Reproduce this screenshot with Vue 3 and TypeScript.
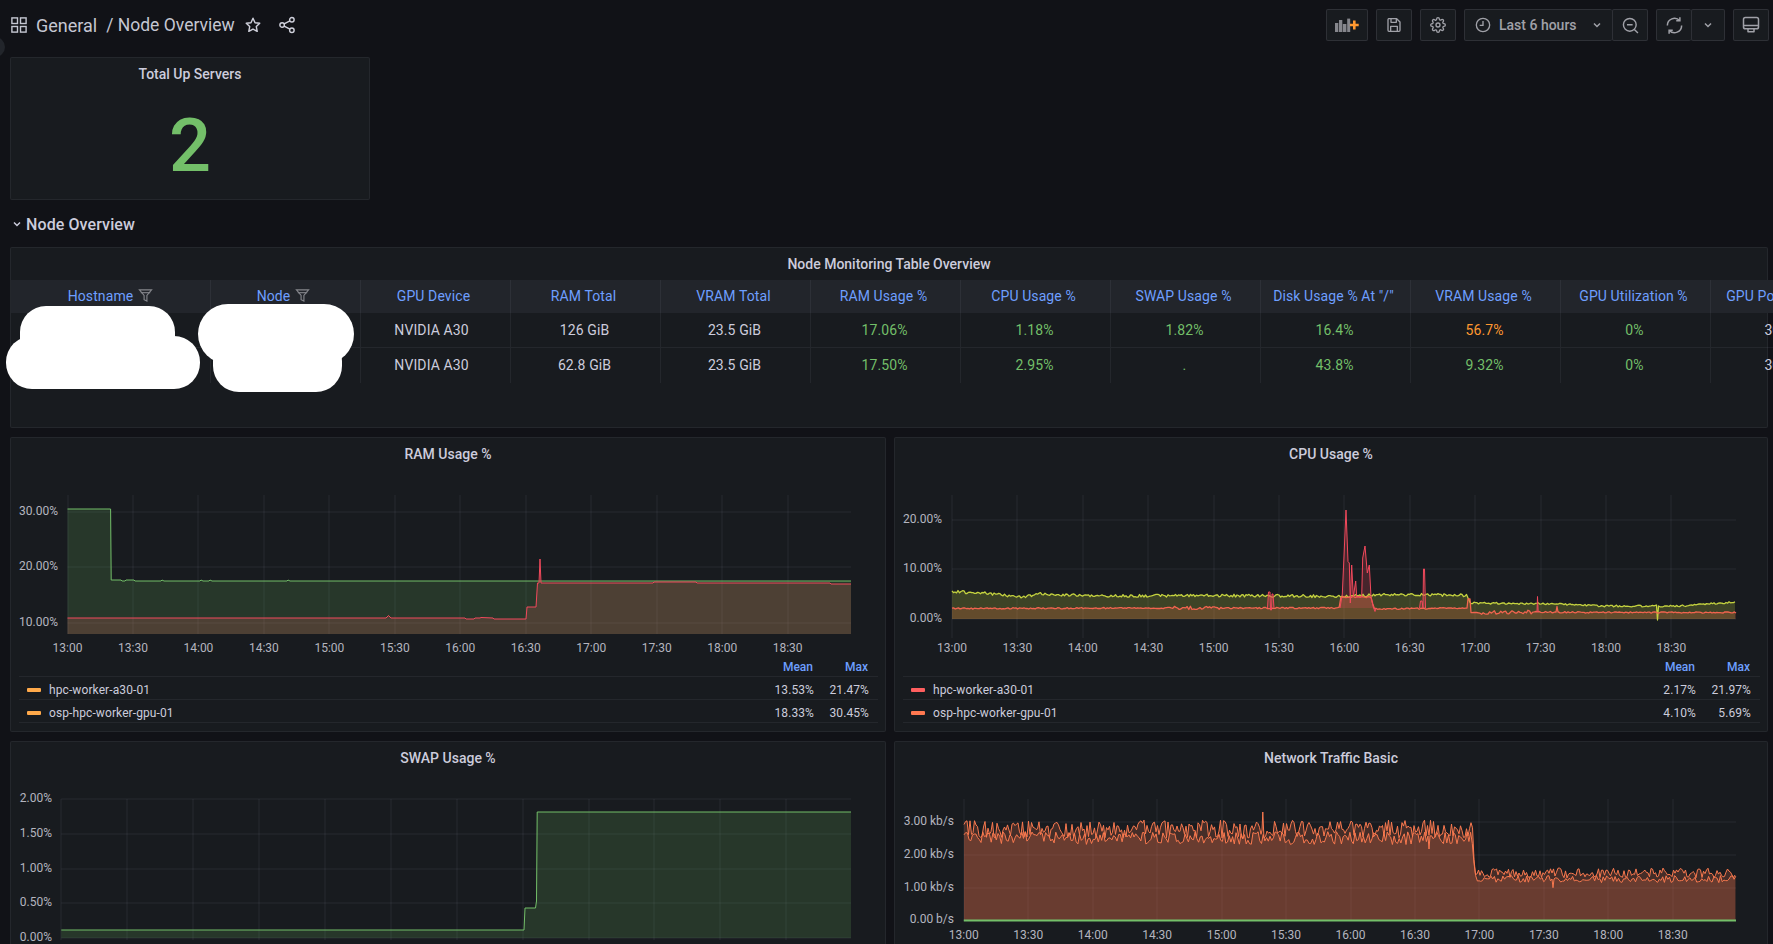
<script setup lang="ts">
type Pt = [number, number]

interface Series {
  d: string
  area: string
  stroke: string
  fill: string
  width: number
}
interface LegendRow {
  name: string
  color: string
  mean: string
  max: string
}
interface Chart {
  title: string
  ox: number
  oy: number
  left: number
  right: number
  top: number
  bottom: number
  labelRight: number
  labelY: number
  x0: number
  step: number
  yTicks: { label: string; y: number }[]
  series: Series[]
  legend: LegendRow[]
}

function rng(seed: number) {
  let s = seed
  return () => {
    s = (s * 1664525 + 1013904223) >>> 0
    return s / 4294967296
  }
}

function toPath(pts: Pt[]): string {
  return pts.map((p, i) => (i ? 'L' : 'M') + p[0].toFixed(1) + ' ' + p[1].toFixed(1)).join(' ')
}
function toArea(pts: Pt[], bottom: number): string {
  const a = pts[0]
  const b = pts[pts.length - 1]
  return toPath(pts) + ` L${b[0]} ${bottom} L${a[0]} ${bottom} Z`
}
function series(pts: Pt[], bottom: number, stroke: string, fill: string, width = 1): Series {
  return { d: toPath(pts), area: toArea(pts, bottom), stroke, fill, width }
}

function interp(stops: Pt[], x: number): number {
  for (let i = 1; i < stops.length; i++) {
    if (x <= stops[i][0]) {
      const [x0, y0] = stops[i - 1]
      const [x1, y1] = stops[i]
      return y0 + ((y1 - y0) * (x - x0)) / (x1 - x0 || 1)
    }
  }
  return stops[stops.length - 1][1]
}

function noisy(stops: Pt[], step: number, amp: (x: number) => number, seed: number, overrides: Pt[][] = []): Pt[] {
  const r = rng(seed)
  const out: Pt[] = []
  const start = stops[0][0]
  const end = stops[stops.length - 1][0]
  for (let x = start; x <= end; x += step) {
    const inside = overrides.some((o) => x >= o[0][0] && x <= o[o.length - 1][0])
    const n = (r() - 0.5) * 2 * amp(x)
    if (!inside) out.push([x, interp(stops, x) + n])
  }
  for (const o of overrides) out.push(...o)
  return out.sort((a, b) => a[0] - b[0])
}

// RAM panel
const ramGreen: Pt[] = [
  [67.5, 509], [110.6, 509], [111.2, 580], [121, 580], [122, 581], [125, 581], [126, 580], [134, 580], [135, 581], [150, 581],
  [161, 581], [162, 580], [164, 581], [200, 581], [201, 580], [203, 581], [209, 581], [210, 580], [212, 581], [287, 581], [288, 580], [290, 581], [851, 581],
]
const ramRed: Pt[] = [
  [67.5, 618], [386, 618], [388.5, 615.5], [391, 618], [465, 618], [466, 619], [474, 619], [475, 618], [480, 618], [481, 617.5], [493, 618], [494, 619], [526, 619],
  [527, 607], [536, 607], [537.5, 583], [539, 583], [540, 559], [541, 583], [653, 583], [654, 582], [696, 582], [697, 583], [830, 583], [831, 584], [851, 584],
]

// CPU panel
const cpuYellow = noisy(
  [[952, 591.5], [985, 593], [1020, 597], [1040, 594], [1100, 596], [1200, 595.5], [1300, 596], [1340, 596.5], [1376, 595], [1420, 594.5], [1467, 595.5], [1470, 603], [1560, 604], [1600, 606], [1680, 606], [1736, 602]],
  1.5,
  (x) => (x < 1467 ? 1.4 : 0.9),
  7,
  [[[1656.5, 605], [1657.5, 620], [1658.5, 606]]],
)
const cpuOrange = noisy(
  [[952, 608.5], [1170, 608], [1268, 608], [1339, 608], [1341, 597], [1371, 597], [1374, 609], [1466, 608], [1471, 613], [1530, 612], [1600, 612.5], [1736, 612.5]],
  1.6,
  (x) => (x > 1481 && x < 1532 ? 1.9 : x > 1173 && x < 1223 ? 1.7 : 0.7),
  19,
  [
    [[1467, 608], [1468, 599], [1470, 599], [1471, 612.5]],
    [[1556, 612], [1557, 606.5], [1558, 612]],
  ],
)
const redSpike: Pt[] = [
  [1340, 608], [1342.3, 594], [1344, 556], [1346, 510], [1348, 561.5], [1349.3, 563], [1350.3, 603], [1351.7, 565], [1353.3, 597], [1355.7, 581], [1356.7, 597], [1361.7, 597],
  [1362.7, 558], [1365, 546], [1367.3, 573], [1369.3, 565], [1371, 597], [1373.3, 607], [1375, 611.5], [1376, 608],
]
const redB: Pt[] = [[1267.5, 608], [1268.5, 592], [1270, 592], [1270.5, 610], [1271.5, 610], [1272, 594], [1273, 594], [1274, 608]]
const redC: Pt[] = [[1419.5, 608], [1420.5, 601], [1422, 601], [1423, 608], [1423.5, 569], [1424.5, 569], [1425.5, 608]]
const redD: Pt[] = [[1537, 612], [1537.5, 596.5], [1538.2, 612]]

// Swap panel
const swapGreen: Pt[] = [
  [61.3, 930], [524, 930], [525, 908], [535.5, 908], [536.5, 901], [537.2, 812], [851, 812],
]

// Network panel
function netStops(hi: number, lo: number): Pt[] {
  return [[964, hi], [1472, hi], [1475, lo], [1736, lo]]
}
const netA = noisy(netStops(829, 873), 1.5, (x) => (x < 1473 ? 9 : 5), 31, [[[1262, 830], [1262.8, 812], [1263.6, 830]]])
const netB = noisy(netStops(838, 879), 1.7, (x) => (x < 1473 ? 6.5 : 3.6), 53, [
  [[1428, 836], [1429, 849], [1430, 836]],
  [[1552, 879], [1553, 887.7], [1554, 879]],
])

const gf = 'rgba(100,170,90,0.2)'
const rf = 'rgba(242,73,92,0.22)'
const charts: Chart[] = [
  {
    title: 'RAM Usage %', ox: 11, oy: 470, left: 67.5, right: 851, top: 495, bottom: 634, labelRight: 58, labelY: 648, x0: 67.5, step: 65.47,
    yTicks: [{ label: '30.00%', y: 512 }, { label: '20.00%', y: 567 }, { label: '10.00%', y: 623 }],
    series: [series(ramGreen, 634, '#73BF69', gf), series(ramRed, 634, '#F2495C', 'rgba(255,105,98,0.18)')],
    legend: [
      { name: 'hpc-worker-a30-01', color: '#FFA94A', mean: '13.53%', max: '21.47%' },
      { name: 'osp-hpc-worker-gpu-01', color: '#FFA94A', mean: '18.33%', max: '30.45%' },
    ],
  },
  {
    title: 'CPU Usage %', ox: 895, oy: 470, left: 952, right: 1736, top: 495, bottom: 638, labelRight: 942, labelY: 648, x0: 952, step: 65.4,
    yTicks: [{ label: '20.00%', y: 520 }, { label: '10.00%', y: 569 }, { label: '0.00%', y: 619 }],
    series: [
      series(cpuYellow, 619, '#C4D23F', 'rgba(196,210,63,0.22)', 1.3),
      series(cpuOrange, 619, '#F2644F', 'rgba(255,110,70,0.2)', 1.3),
      series(redSpike, 608, '#F2495C', rf),
      series(redB, 608, '#F2495C', rf),
      series(redC, 608, '#F2495C', rf),
      series(redD, 612, '#F2495C', rf),
    ],
    legend: [
      { name: 'hpc-worker-a30-01', color: '#FF5F5F', mean: '2.17%', max: '21.97%' },
      { name: 'osp-hpc-worker-gpu-01', color: '#FF7850', mean: '4.10%', max: '5.69%' },
    ],
  },
  {
    title: 'SWAP Usage %', ox: 11, oy: 774, left: 61.3, right: 851, top: 799, bottom: 940, labelRight: 52, labelY: 952, x0: 61.3, step: 65.9,
    yTicks: [{ label: '2.00%', y: 799 }, { label: '1.50%', y: 834 }, { label: '1.00%', y: 869 }, { label: '0.50%', y: 903 }, { label: '0.00%', y: 938 }],
    series: [series(swapGreen, 938, '#73BF69', gf)],
    legend: [],
  },
  {
    title: 'Network Traffic Basic', ox: 895, oy: 774, left: 963.8, right: 1736, top: 799, bottom: 921, labelRight: 954, labelY: 935, x0: 963.8, step: 64.45,
    yTicks: [{ label: '3.00 kb/s', y: 822 }, { label: '2.00 kb/s', y: 855 }, { label: '1.00 kb/s', y: 888 }, { label: '0.00 b/s', y: 920 }],
    series: [
      series(netA, 920, '#F9794F', 'rgba(249,121,81,0.2)'),
      series(netB, 920, '#F9794F', 'rgba(249,121,81,0.2)'),
      series([[963.8, 920.5], [1736, 920.5]], 920.5, '#73BF69', 'transparent', 2),
    ],
    legend: [],
  },
]

const timeLabels = ['13:00', '13:30', '14:00', '14:30', '15:00', '15:30', '16:00', '16:30', '17:00', '17:30', '18:00', '18:30']

interface Cell { text: string; tone?: string }
const columns = ['GPU Device', 'RAM Total', 'VRAM Total', 'RAM Usage %', 'CPU Usage %', 'SWAP Usage %', 'Disk Usage % At "/"', 'VRAM Usage %', 'GPU Utilization %', 'GPU Power Usage']
const rows: Cell[][] = [
  [
    { text: 'NVIDIA A30', tone: 'device' }, { text: '126 GiB' }, { text: '23.5 GiB' }, { text: '17.06%', tone: 'green' }, { text: '1.18%', tone: 'green' },
    { text: '1.82%', tone: 'green' }, { text: '16.4%', tone: 'green' }, { text: '56.7%', tone: 'orange' }, { text: '0%', tone: 'green' }, { text: '30.2W' },
  ],
  [
    { text: 'NVIDIA A30', tone: 'device' }, { text: '62.8 GiB' }, { text: '23.5 GiB' }, { text: '17.50%', tone: 'green' }, { text: '2.95%', tone: 'green' },
    { text: '.', tone: 'green' }, { text: '43.8%', tone: 'green' }, { text: '9.32%', tone: 'green' }, { text: '0%', tone: 'green' }, { text: '30.4W' },
  ],
]
</script>

<template>
  <div class="page">
    <div class="side-toggle"></div>

    <header class="topbar">
      <div class="crumbs">
        <svg class="ic grid-ic" viewBox="0 0 16 16" width="16" height="16" fill="none" stroke="#c5c7d2" stroke-width="1.4">
          <rect x="0.9" y="0.9" width="5.6" height="5.6" />
          <rect x="9.5" y="0.9" width="5.6" height="5.6" />
          <rect x="0.9" y="9.5" width="5.6" height="5.6" />
          <rect x="9.5" y="9.5" width="5.6" height="5.6" />
        </svg>
        <span class="crumb-a">General</span>
        <span class="crumb-b">/ Node Overview</span>
        <svg class="ic star-ic" viewBox="0 0 24 24" width="18" height="18" fill="none" stroke="#d0d1dc" stroke-width="1.9" stroke-linejoin="round">
          <path d="M12 3l2.7 5.9 6.3.8-4.6 4.4 1.2 6.4L12 17.4l-5.6 3.1 1.2-6.4L3 9.7l6.3-.8z" />
        </svg>
        <svg class="ic share-ic" viewBox="0 0 24 24" width="18" height="18" fill="none" stroke="#d0d1dc" stroke-width="1.9">
          <circle cx="18.5" cy="5" r="3" />
          <circle cx="5.5" cy="12" r="3" />
          <circle cx="18.5" cy="19" r="3" />
          <path d="M8.2 10.6l7.6-4.2M8.2 13.4l7.6 4.2" />
        </svg>
      </div>
      <div class="actions">
        <button class="btn add-btn">
          <svg viewBox="0 0 24 14" width="24" height="14">
            <rect x="0" y="5" width="3.3" height="9" fill="#85868c" />
            <rect x="4" y="2" width="3.3" height="12" fill="#85868c" />
            <rect x="7.8" y="6" width="3.6" height="8" fill="#85868c" />
            <rect x="12.2" y="0.6" width="3" height="13.4" fill="#85868c" />
            <path d="M19.3 2.6v8.8M14.9 7h8.8" stroke="#FF9830" stroke-width="2.6" fill="none" />
          </svg>
        </button>
        <button class="btn square">
          <svg viewBox="0 0 24 24" width="16" height="16" fill="none" stroke="#a0a1a8" stroke-width="2" stroke-linejoin="round">
            <path d="M4 2.5h12l5 5V20a1.5 1.5 0 0 1-1.5 1.5h-15A1.5 1.5 0 0 1 3 20V4a1.5 1.5 0 0 1 1-1.5z" />
            <path d="M7.5 3v5h8V3M7 21v-7h10v7" />
          </svg>
        </button>
        <button class="btn square">
          <svg viewBox="0 0 24 24" width="16" height="16" fill="none" stroke="#a0a1a8" stroke-width="2">
            <circle cx="12" cy="12" r="3" />
            <path d="M19.4 15a1.65 1.65 0 0 0 .33 1.82l.06.06a2 2 0 0 1 0 2.83 2 2 0 0 1-2.83 0l-.06-.06a1.65 1.65 0 0 0-1.82-.33 1.65 1.65 0 0 0-1 1.51V21a2 2 0 0 1-2 2 2 2 0 0 1-2-2v-.09A1.65 1.65 0 0 0 9 19.4a1.65 1.65 0 0 0-1.82.33l-.06.06a2 2 0 0 1-2.83 0 2 2 0 0 1 0-2.83l.06-.06a1.65 1.65 0 0 0 .33-1.82 1.65 1.65 0 0 0-1.51-1H3a2 2 0 0 1-2-2 2 2 0 0 1 2-2h.09A1.65 1.65 0 0 0 4.6 9a1.65 1.65 0 0 0-.33-1.82l-.06-.06a2 2 0 0 1 0-2.83 2 2 0 0 1 2.83 0l.06.06a1.65 1.65 0 0 0 1.82.33H9a1.65 1.65 0 0 0 1-1.51V3a2 2 0 0 1 2-2 2 2 0 0 1 2 2v.09a1.65 1.65 0 0 0 1 1.51 1.65 1.65 0 0 0 1.82-.33l.06-.06a2 2 0 0 1 2.83 0 2 2 0 0 1 0 2.83l-.06.06a1.65 1.65 0 0 0-.33 1.82V9a1.65 1.65 0 0 0 1.51 1H21a2 2 0 0 1 2 2 2 2 0 0 1-2 2h-.09a1.65 1.65 0 0 0-1.51 1z" />
          </svg>
        </button>
        <div class="btn-group">
          <button class="btn time-btn">
            <svg viewBox="0 0 24 24" width="16" height="16" fill="none" stroke="#a0a1a8" stroke-width="2">
              <circle cx="12" cy="12" r="10" />
              <path d="M12 6v6.5H7" />
            </svg>
            <span>Last 6 hours</span>
            <svg class="chev" viewBox="0 0 12 12" width="12" height="12" fill="none" stroke="#a0a1a8" stroke-width="1.5">
              <path d="M3 4.5l3 3 3-3" />
            </svg>
          </button>
          <button class="btn square joined">
            <svg viewBox="0 0 24 24" width="17" height="17" fill="none" stroke="#a0a1a8" stroke-width="2">
              <circle cx="11" cy="11" r="9" />
              <path d="M7 11h8M17.5 17.5l5 5" />
            </svg>
          </button>
        </div>
        <div class="btn-group">
          <button class="btn square">
            <svg viewBox="0 0 24 24" width="19" height="19" fill="none" stroke="#a0a1a8" stroke-width="1.9">
              <path d="M21 12a9 9 0 0 1-15.5 6.3M3 12A9 9 0 0 1 18.5 5.7" />
              <path d="M18.8 1.5v4.6h-4.6M5.2 22.5v-4.6h4.6" />
            </svg>
          </button>
          <button class="btn square joined chev-btn">
            <svg viewBox="0 0 12 12" width="12" height="12" fill="none" stroke="#a0a1a8" stroke-width="1.5">
              <path d="M3 4.5l3 3 3-3" />
            </svg>
          </button>
        </div>
        <button class="btn square">
          <svg viewBox="0 0 24 24" width="18" height="18" fill="none" stroke="#a0a1a8" stroke-width="2" stroke-linejoin="round">
            <rect x="2" y="2" width="20" height="15" rx="2.5" />
            <path d="M2 12.5h20M8 17v4h8v-4" />
          </svg>
        </button>
      </div>
    </header>

    <main class="board">
      <section class="panel stat">
        <h3 class="panel-title">Total Up Servers</h3>
        <div class="stat-value">2</div>
      </section>

      <div class="row-title">
        <svg viewBox="0 0 12 12" width="12" height="12" fill="none" stroke="#ccccdc" stroke-width="1.5">
          <path d="M3 4.5l3 3 3-3" />
        </svg>
        <span>Node Overview</span>
      </div>

      <section class="panel table-panel">
        <h3 class="panel-title">Node Monitoring Table Overview</h3>
        <div class="tbl">
          <div class="tr head">
            <div class="td wide">
              Hostname
              <svg class="funnel" viewBox="0 0 16 16" width="15" height="15" fill="none" stroke="#85868c" stroke-width="1.2">
                <path d="M1.5 2h13l-5 6v6l-3-1.5V8z" /><path d="M3 5h10" />
              </svg>
            </div>
            <div class="td">
              Node
              <svg class="funnel" viewBox="0 0 16 16" width="15" height="15" fill="none" stroke="#85868c" stroke-width="1.2">
                <path d="M1.5 2h13l-5 6v6l-3-1.5V8z" /><path d="M3 5h10" />
              </svg>
            </div>
            <div v-for="c in columns" :key="c" class="td">{{ c }}</div>
          </div>
          <div v-for="(r, i) in rows" :key="i" class="tr body">
            <div class="td wide"></div>
            <div class="td"></div>
            <div v-for="(c, j) in r" :key="j" class="td" :class="c.tone">{{ c.text }}</div>
          </div>
        </div>
      </section>

      <div class="chart-grid">
        <section v-for="c in charts" :key="c.title" class="panel chart-panel">
          <h3 class="panel-title">{{ c.title }}</h3>
          <svg class="chart" :viewBox="`${c.ox} ${c.oy} 873 186`">
            <g class="grid">
              <line v-for="t in c.yTicks" :key="t.label" :x1="c.left" :x2="c.right" :y1="t.y" :y2="t.y" />
              <line v-for="(l, i) in timeLabels" :key="l" :x1="Math.round(c.x0 + i * c.step)" :x2="Math.round(c.x0 + i * c.step)" :y1="c.top" :y2="c.bottom" />
            </g>
            <path v-for="(s, i) in c.series" :key="'a' + i" :d="s.area" :fill="s.fill" />
            <path v-for="(s, i) in c.series" :key="'l' + i" :d="s.d" fill="none" :stroke="s.stroke" :stroke-width="s.width" stroke-linejoin="round" />
            <text v-for="t in c.yTicks" :key="'y' + t.label" class="axis" :x="c.labelRight" :y="t.y + 2.8" text-anchor="end">{{ t.label }}</text>
            <text v-for="(l, i) in timeLabels" :key="'x' + l" class="axis" :x="c.x0 + i * c.step" :y="c.labelY + 4.2" text-anchor="middle">{{ l }}</text>
          </svg>
          <div v-if="c.legend.length" class="legend">
            <div class="leg-head">
              <span class="mean">Mean</span>
              <span class="max">Max</span>
            </div>
            <div v-for="l in c.legend" :key="l.name" class="leg-row">
              <i class="swatch" :style="{ background: l.color }"></i>
              <span class="leg-name">{{ l.name }}</span>
              <span class="mean">{{ l.mean }}</span>
              <span class="max">{{ l.max }}</span>
            </div>
          </div>
        </section>
      </div>
    </main>

    <div class="blob b1"></div>
    <div class="blob b2"></div>
    <div class="blob b3"></div>
    <div class="blob b4"></div>
  </div>
</template>

<style>
html, body {
  margin: 0;
  background: #111217;
  overflow: hidden;
}
</style>

<style scoped>
.page {
  position: relative;
  width: 1773px;
  height: 944px;
  overflow: hidden;
  background: #111217;
  color: #ccccdc;
  font-family: Roboto, "Liberation Sans", sans-serif;
  font-size: 14px;
}
.side-toggle {
  position: absolute;
  left: -15px;
  top: 37px;
  width: 20px;
  height: 20px;
  border-radius: 50%;
  background: #22252b;
}
.topbar {
  height: 57px;
  box-sizing: border-box;
  padding: 9px 4px 0 11px;
  display: flex;
  justify-content: space-between;
  align-items: flex-start;
}
.crumbs {
  height: 32px;
  display: flex;
  align-items: center;
  font-size: 18px;
  color: #c5c7d2;
}
.crumb-a {
  margin-left: 9px;
}
.crumb-b {
  margin-left: 9px;
  font-size: 17.5px;
}
.star-ic {
  margin-left: 9px;
}
.share-ic {
  margin-left: 16px;
}
.actions {
  display: flex;
  gap: 8px;
}
.btn-group {
  display: flex;
}
.btn {
  height: 32px;
  box-sizing: border-box;
  display: flex;
  align-items: center;
  justify-content: center;
  padding: 0;
  background: #181b1f;
  border: 1px solid rgba(204, 204, 220, 0.12);
  border-radius: 2px;
  color: #a0a1a8;
  font-family: inherit;
  font-size: 14px;
  font-weight: 500;
}
.square {
  width: 36px;
}
.add-btn {
  width: 42px;
}
.time-btn {
  width: 148px;
  justify-content: flex-start;
  padding-left: 10px;
  border-right: none;
}
.time-btn span {
  margin-left: 8px;
}
.time-btn .chev {
  margin-left: 14px;
}
.btn-group > .btn:first-child:not(.time-btn) {
  width: 35px;
  border-right: none;
}
.joined {
  border-left: 1px solid rgba(204, 204, 220, 0.12);
}
.chev-btn {
  width: 34px;
}
.board {
  padding: 0 5px 0 10px;
}
.panel {
  box-sizing: border-box;
  background: #181b1f;
  border: 1px solid rgba(204, 204, 220, 0.07);
  border-radius: 2px;
}
.panel-title {
  margin: 0;
  height: 32px;
  line-height: 32px;
  text-align: center;
  font-size: 14px;
  font-weight: 500;
  color: #ccccdc;
}
.stat {
  width: 360px;
  height: 143px;
}
.stat-value {
  margin-top: 3px;
  height: 106px;
  line-height: 106px;
  text-align: center;
  font-size: 74px;
  font-weight: 500;
  color: #73bf69;
}
.row-title {
  height: 47px;
  box-sizing: border-box;
  padding: 1px 0 0 1px;
  display: flex;
  align-items: center;
  gap: 3px;
  font-size: 16px;
  font-weight: 500;
  letter-spacing: 0.1px;
  color: #ccccdc;
}
.table-panel {
  height: 181px;
}
.tbl {
  width: 1900px;
  letter-spacing: 0.1px;
}
.tr {
  display: flex;
}
.tr.head {
  height: 33px;
  background: #22252b;
  color: #6e9fff;
}
.tr.head .td {
  padding-bottom: 2px;
  padding-right: 4px;
}
.tr.head .td.wide {
  padding-right: 0;
}
.tr.body {
  height: 35px;
  border-bottom: 1px solid rgba(204, 204, 220, 0.07);
  box-sizing: border-box;
}
.tr.body:last-child {
  border-bottom: none;
}
.tr.body:last-child .td {
  padding-bottom: 1px;
}
.td {
  width: 150px;
  flex: none;
  box-sizing: border-box;
  display: flex;
  align-items: center;
  justify-content: center;
  padding-right: 2px;
  border-right: 1px solid rgba(204, 204, 220, 0.07);
}
.td.wide {
  width: 200px;
}
.td.device {
  padding-right: 8px;
}
.funnel {
  margin-left: 5px;
}
.green {
  color: #73bf69;
}
.orange {
  color: #ff9830;
}
.chart-grid {
  margin-top: 9px;
  display: grid;
  grid-template-columns: 876px 874px;
  grid-auto-rows: 295px;
  column-gap: 8px;
  row-gap: 9px;
}
.chart {
  display: block;
  width: 873px;
  height: 186px;
}
.grid line {
  stroke: rgba(204, 204, 220, 0.09);
  stroke-width: 1;
}
.axis {
  font-size: 12px;
  fill: #b4b5bf;
  font-family: Roboto, "Liberation Sans", sans-serif;
}
.legend {
  padding: 0 7px 0 8px;
  font-size: 12px;
}
.leg-head {
  height: 21px;
  display: flex;
  justify-content: flex-end;
  align-items: center;
  padding: 1px 10px 0 0;
  color: #6e9fff;
  font-weight: 500;
  border-bottom: 1px solid rgba(204, 204, 220, 0.07);
  box-sizing: border-box;
}
.leg-row {
  height: 23px;
  box-sizing: border-box;
  display: flex;
  align-items: center;
  padding: 3px 9px 0 8px;
  letter-spacing: 0.1px;
  border-bottom: 1px solid rgba(204, 204, 220, 0.07);
}
.swatch {
  width: 14px;
  height: 4px;
  border-radius: 1px;
}
.leg-name {
  flex: 1;
  margin-left: 8px;
}
.mean {
  width: 50px;
  text-align: right;
}
.max {
  width: 55px;
  text-align: right;
}
.blob {
  position: absolute;
  background: #fff;
}
.b1 {
  left: 20px;
  top: 306px;
  width: 155px;
  height: 50px;
  border-radius: 26px 26px 0 0;
}
.b2 {
  left: 6px;
  top: 336px;
  width: 194px;
  height: 53px;
  border-radius: 26px;
}
.b3 {
  left: 198px;
  top: 304px;
  width: 156px;
  height: 60px;
  border-radius: 30px;
}
.b4 {
  left: 213px;
  top: 335px;
  width: 129px;
  height: 57px;
  border-radius: 26px;
}
</style>
